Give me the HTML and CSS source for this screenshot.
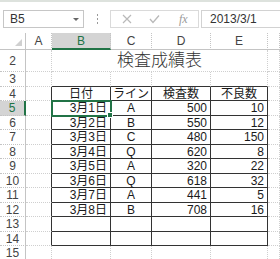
FILE: index.html
```html
<!DOCTYPE html>
<html lang="ja">
<head>
    <meta charset="UTF-8">
    <meta name="viewport" content="width=device-width, initial-scale=1.0">
    <title>検査成績表</title>
    <link rel="stylesheet" href="styles.css">
</head>
<body>
    <div class="top-band"></div>

    <!-- 数式バー -->
    <div class="formula-bar">
        <div class="name-box">
            <span>B5</span>
            <span class="drop"></span>
        </div>
        <div class="grip"><i></i><i></i><i></i></div>
        <div class="fx-buttons">
            <svg class="btn" width="10" height="10" viewBox="0 0 10 10"><path d="M1 1 L9 9 M9 1 L1 9" stroke="#b9b9b9" stroke-width="1.2" fill="none"/></svg>
            <svg class="btn" width="11" height="10" viewBox="0 0 11 10"><path d="M1 5 L4 8.5 L10 1.5" stroke="#b9b9b9" stroke-width="1.3" fill="none"/></svg>
            <span class="fx">fx</span>
        </div>
        <div class="formula-input">2013/3/1</div>
    </div>

    <!-- シート -->
    <div class="sheet">
        <div class="corner"><span class="tri"></span></div>
        <div class="col-head">A</div>
        <div class="col-head sel">B</div>
        <div class="col-head">C</div>
        <div class="col-head">D</div>
        <div class="col-head">E</div>
        <div class="col-head"></div>

        <div class="row-head">2</div>
        <div class="cell"></div>
        <div class="cell title">検査成績表</div>
        <div class="cell"></div>

        <div class="row-head">3</div>
        <div class="cell"></div>
        <div class="cell t-top"></div>
        <div class="cell t-top"></div>
        <div class="cell t-top"></div>
        <div class="cell t-top"></div>
        <div class="cell"></div>

        <div class="row-head">4</div>
        <div class="cell t-left"></div>
        <div class="cell t ctr">日付</div>
        <div class="cell t ctr">ライン</div>
        <div class="cell t ctr">検査数</div>
        <div class="cell t ctr">不良数</div>
        <div class="cell"></div>

        <div class="row-head sel">5</div>
        <div class="cell t-left"></div>
        <div class="cell t num active">3月1日</div>
        <div class="cell t ctr">A</div>
        <div class="cell t num">500</div>
        <div class="cell t num">10</div>
        <div class="cell"></div>

        <div class="row-head">6</div>
        <div class="cell t-left"></div>
        <div class="cell t num">3月2日</div>
        <div class="cell t ctr">B</div>
        <div class="cell t num">550</div>
        <div class="cell t num">12</div>
        <div class="cell"></div>

        <div class="row-head">7</div>
        <div class="cell t-left"></div>
        <div class="cell t num">3月3日</div>
        <div class="cell t ctr">C</div>
        <div class="cell t num">480</div>
        <div class="cell t num">150</div>
        <div class="cell"></div>

        <div class="row-head">8</div>
        <div class="cell t-left"></div>
        <div class="cell t num">3月4日</div>
        <div class="cell t ctr">Q</div>
        <div class="cell t num">620</div>
        <div class="cell t num">8</div>
        <div class="cell"></div>

        <div class="row-head">9</div>
        <div class="cell t-left"></div>
        <div class="cell t num">3月5日</div>
        <div class="cell t ctr">A</div>
        <div class="cell t num">320</div>
        <div class="cell t num">22</div>
        <div class="cell"></div>

        <div class="row-head">10</div>
        <div class="cell t-left"></div>
        <div class="cell t num">3月6日</div>
        <div class="cell t ctr">Q</div>
        <div class="cell t num">618</div>
        <div class="cell t num">32</div>
        <div class="cell"></div>

        <div class="row-head">11</div>
        <div class="cell t-left"></div>
        <div class="cell t num">3月7日</div>
        <div class="cell t ctr">A</div>
        <div class="cell t num">441</div>
        <div class="cell t num">5</div>
        <div class="cell"></div>

        <div class="row-head">12</div>
        <div class="cell t-left"></div>
        <div class="cell t num">3月8日</div>
        <div class="cell t ctr">B</div>
        <div class="cell t num">708</div>
        <div class="cell t num">16</div>
        <div class="cell"></div>

        <div class="row-head">13</div>
        <div class="cell t-left"></div>
        <div class="cell t"></div>
        <div class="cell t"></div>
        <div class="cell t"></div>
        <div class="cell t"></div>
        <div class="cell"></div>

        <div class="row-head">14</div>
        <div class="cell t-left"></div>
        <div class="cell t"></div>
        <div class="cell t"></div>
        <div class="cell t"></div>
        <div class="cell t"></div>
        <div class="cell"></div>

        <div class="row-head">15</div>
        <div class="cell"></div>
        <div class="cell"></div>
        <div class="cell"></div>
        <div class="cell"></div>
        <div class="cell"></div>
        <div class="cell"></div>
    </div>
</body>
</html>
```

FILE: styles.css
```css
body {
    margin: 0;
    padding: 0;
    width: 280px;
    height: 259px;
    overflow: hidden;
    background: #fff;
    font-family: "Liberation Sans", "Noto Sans CJK JP", sans-serif;
    font-size: 12px;
    color: #222;
}

.top-band {
    height: 2px;
    background: #dde2dd;
}

/* 数式バー */
.formula-bar {
    height: 31px;
    box-sizing: border-box;
    padding-top: 8px;
    display: flex;
    align-items: flex-start;
}

.name-box {
    margin-left: 3px;
    width: 81px;
    height: 18px;
    box-sizing: border-box;
    border: 1px solid #c6c6c6;
    display: flex;
    align-items: center;
    justify-content: space-between;
    padding: 0 4px 0 6px;
    color: #333;
}

.name-box .drop {
    width: 0;
    height: 0;
    border-left: 3px solid transparent;
    border-right: 3px solid transparent;
    border-top: 3px solid #666;
}

.grip {
    width: 26px;
    height: 18px;
    display: flex;
    flex-direction: column;
    align-items: center;
    justify-content: center;
    gap: 2px;
}

.grip i {
    width: 1px;
    height: 2px;
    background: #9a9a9a;
}

.fx-buttons {
    width: 89px;
    height: 18px;
    box-sizing: border-box;
    border: 1px solid #dadada;
    display: flex;
    align-items: center;
    padding-left: 11px;
    gap: 17px;
}

.fx-buttons .fx {
    font-family: "Liberation Serif", serif;
    font-style: italic;
    font-size: 12px;
    color: #9a9a9a;
    margin-left: 2px;
}

.formula-input {
    margin-left: 2px;
    flex: 1;
    height: 18px;
    box-sizing: border-box;
    border: 1px solid #d2d2d2;
    border-right: none;
    padding-left: 8px;
    line-height: 16px;
    color: #333;
}

/* シート */
.sheet {
    display: grid;
    grid-template-columns: 26px 26px 59px 41px 59px 57px 1fr;
    grid-template-rows: 17px 22px 15px 14px 15px 14px 15px 14px 15px 14px 15px 14px 15px 14px 15px;
}

.corner {
    position: relative;
    box-sizing: border-box;
    border-right: 1px solid #c4c4c4;
    border-bottom: 1px solid #c4c4c4;
}

.corner .tri {
    position: absolute;
    right: 3px;
    bottom: 3px;
    width: 0;
    height: 0;
    border-left: 7px solid transparent;
    border-bottom: 7px solid #d0d0d0;
}

.col-head {
    box-sizing: border-box;
    border-right: 1px dotted #c4c4c4;
    border-bottom: 1px solid #c4c4c4;
    display: flex;
    align-items: center;
    justify-content: center;
    color: #444;
}

.col-head.sel {
    background: #d4d4d4;
    color: #217346;
    border-bottom: 2px solid #217346;
}

.row-head {
    box-sizing: border-box;
    border-right: 1px solid #c4c4c4;
    border-bottom: 1px dotted #c4c4c4;
    display: flex;
    align-items: center;
    justify-content: center;
    color: #444;
}

.row-head.sel {
    background: #d4d4d4;
    color: #217346;
    border-right: 2px solid #217346;
}

.cell {
    box-sizing: border-box;
    border-right: 1px dotted #cfcfcf;
    border-bottom: 1px dotted #cfcfcf;
    display: flex;
    align-items: center;
    line-height: 1;
    color: #1a1a1a;
    white-space: nowrap;
}

.title {
    grid-column: span 4;
    justify-content: center;
    font-size: 17px;
    font-weight: 300;
    color: #333;
}

/* 表の罫線 */
.t {
    border-right: 1px solid #333;
    border-bottom: 1px solid #333;
}

.t-top {
    border-bottom: 1px solid #333;
}

.t-left {
    border-right: 1px solid #333;
}

.num {
    justify-content: flex-end;
    padding-right: 3px;
}

.ctr {
    justify-content: center;
}

.active {
    position: relative;
    outline: 2px solid #217346;
    outline-offset: -1px;
}

.active::after {
    content: "";
    position: absolute;
    right: -3px;
    bottom: -3px;
    width: 4px;
    height: 4px;
    background: #217346;
    border: 1px solid #fff;
}
```
